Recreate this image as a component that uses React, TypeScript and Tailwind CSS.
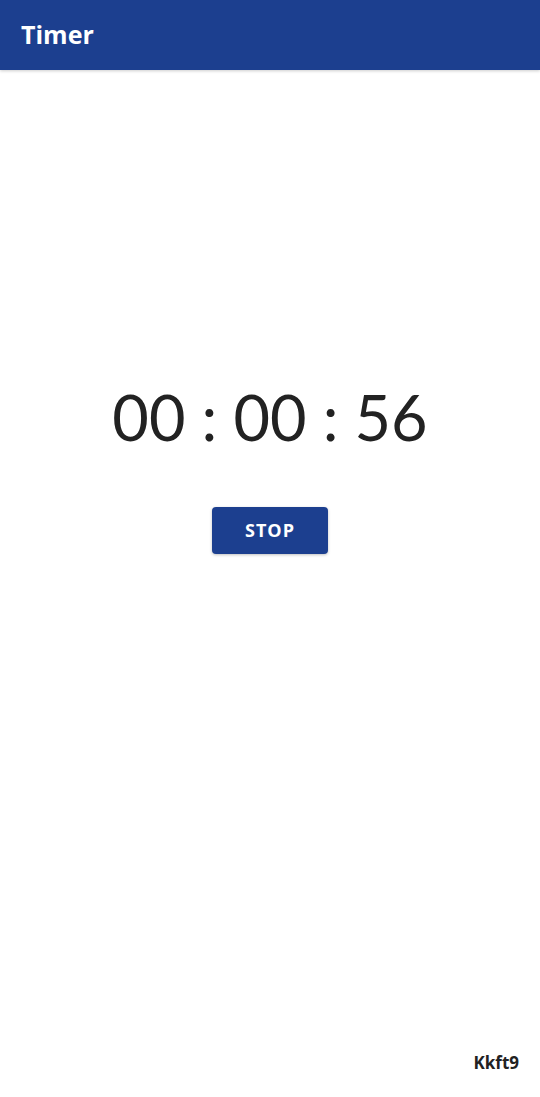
export default function App() {
  return (
    <div className="flex h-[1097px] w-[540px] flex-col bg-white font-['Open_Sans',sans-serif]">
      <header className="flex h-[70px] shrink-0 items-center bg-[#1c3f8f] px-[21px] shadow-[0_1px_3px_rgba(0,0,0,0.2)]">
        <h1 className="text-[25px] font-bold text-white">Timer</h1>
      </header>
      <main className="flex flex-1 flex-col items-center pt-[299px]">
        <div className="font-['Lato',sans-serif] text-[63px] leading-[96px] text-[#222]">00 : 00 : 56</div>
        <button className="mt-[42px] h-[47px] w-[116px] rounded-[4px] bg-[#1c3f8f] text-[18px] font-bold tracking-[1px] text-white shadow-[0_1px_3px_rgba(0,0,0,0.25)]">
          STOP
        </button>
      </main>
      <footer className="flex justify-end px-[21px] pb-[22px]">
        <span className="text-[17px] font-bold text-[#222]">Kkft9</span>
      </footer>
    </div>
  );
}
